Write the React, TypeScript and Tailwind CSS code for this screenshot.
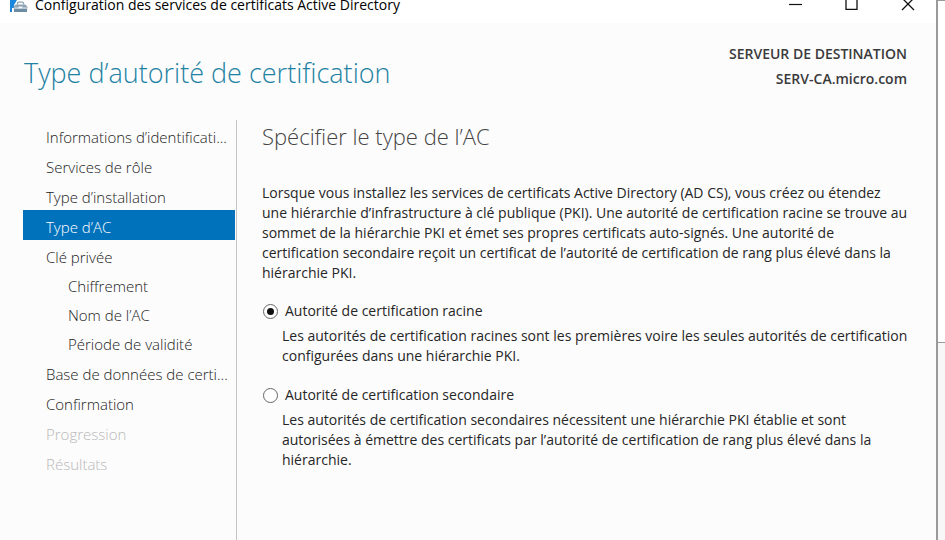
import { useState } from 'react';
import clsx from 'clsx';

type Step = {
  label: string;
  child?: boolean;
  disabled?: boolean;
};

const steps: Step[] = [
  { label: 'Informations d’identificati...' },
  { label: 'Services de rôle' },
  { label: 'Type d’installation' },
  { label: 'Type d’AC' },
  { label: 'Clé privée' },
  { label: 'Chiffrement', child: true },
  { label: 'Nom de l’AC', child: true },
  { label: 'Période de validité', child: true },
  { label: 'Base de données de certi...' },
  { label: 'Confirmation' },
  { label: 'Progression', disabled: true },
  { label: 'Résultats', disabled: true },
];

const options = [
  {
    id: 'racine',
    label: 'Autorité de certification racine',
    lines: [
      'Les autorités de certification racines sont les premières voire les seules autorités de certification',
      'configurées dans une hiérarchie PKI.',
    ],
  },
  {
    id: 'secondaire',
    label: 'Autorité de certification secondaire',
    lines: [
      'Les autorités de certification secondaires nécessitent une hiérarchie PKI établie et sont',
      'autorisées à émettre des certificats par l’autorité de certification de rang plus élevé dans la',
      'hiérarchie.',
    ],
  },
];

const intro = [
  'Lorsque vous installez les services de certificats Active Directory (AD CS), vous créez ou étendez',
  'une hiérarchie d’infrastructure à clé publique (PKI). Une autorité de certification racine se trouve au',
  'sommet de la hiérarchie PKI et émet ses propres certificats auto-signés. Une autorité de',
  'certification secondaire reçoit un certificat de l’autorité de certification de rang plus élevé dans la',
  'hiérarchie PKI.',
];

function Lines({ lines }: { lines: string[] }) {
  return lines.map((line) => (
    <span key={line} className="block whitespace-nowrap">
      {line}
    </span>
  ));
}

function ToolboxIcon() {
  return (
    <svg width="18" height="13" viewBox="0 0 18 13" aria-hidden="true">
      <path d="M0 0h7L4 5v3H2v4H0z" fill="#1b87dc" />
      <path d="M7.500 4.500V3.200Q7.500 2.200 8.500 2.200h4Q13.500 2.200 13.500 3.200v1.300" fill="none" stroke="#8fa5b5" strokeWidth="1.200" />
      <path d="M5.500 4.500h10L17.500 7v1.500h-14V7z" fill="#8fa5b5" />
      <path d="M4 8.500h13V12H4z" fill="#6d8ba1" />
      <path d="M4.500 8h4M12.500 8h4.500" stroke="#e3ebf0" strokeWidth="0.900" />
      <path d="M8.500 6.500h4v2h-4z" fill="#f1f5f8" />
    </svg>
  );
}

function TitleBar() {
  return (
    <header className="flex h-[23px] items-start justify-between bg-white pr-[21px] pl-[10px]">
      <div className="flex items-start gap-[7px]">
        <ToolboxIcon />
        <span className="text-[14px] leading-[10px] whitespace-nowrap text-black">
          Configuration des services de certificats Active Directory
        </span>
      </div>
      <div className="flex gap-[41px]">
        <button type="button" aria-label="Réduire">
          <svg width="15" height="12" viewBox="0 0 15 12" className="block">
            <path d="M1 4.500h13" stroke="#111" strokeWidth="1.200" />
          </svg>
        </button>
        <button type="button" aria-label="Agrandir">
          <svg width="15" height="12" viewBox="0 0 15 12" className="block">
            <path d="M2 -3h11v12.300H2z" fill="none" stroke="#111" strokeWidth="1.300" />
          </svg>
        </button>
        <button type="button" aria-label="Fermer">
          <svg width="15" height="12" viewBox="0 0 15 12" className="block">
            <path d="M2 -2l12 12M14 -2L2 10" stroke="#111" strokeWidth="1.300" />
          </svg>
        </button>
      </div>
    </header>
  );
}

function StepNav() {
  return (
    <nav className="w-[214px] shrink-0 border-r border-[#c4c4c4] pr-px">
      <ul>
        {steps.map(({ label, child, disabled }) => {
          const current = label === 'Type d’AC';
          return (
            <li key={label}>
              <button
                type="button"
                disabled={disabled}
                aria-current={current ? 'step' : undefined}
                className={clsx(
                  'flex w-full items-center pt-1 text-left text-[15px] font-light whitespace-nowrap',
                  child ? 'h-[29px] pl-[45px]' : 'h-[30px] pl-[23px]',
                  current && 'bg-[#0072bc] text-white',
                  disabled && 'text-[#b8b8b8]',
                  !current && !disabled && 'text-[#222]',
                )}
              >
                {label}
              </button>
            </li>
          );
        })}
      </ul>
    </nav>
  );
}

export default function App() {
  const [type, setType] = useState('racine');

  return (
    <div className="flex min-h-screen font-['Open_Sans','Noto_Sans',sans-serif]">
      <div className="flex min-w-0 flex-1 flex-col border-r-2 border-[#9a9a9a] bg-[#fcfcfc]">
        <TitleBar />
        <div className="flex items-start justify-between pt-[18px] pr-[29px] pl-6">
          <h1 className="pt-[10px] text-[27px] leading-[44px] font-light whitespace-nowrap text-[#1e82a3]">
            Type d’autorité de certification
          </h1>
          <div className="text-right text-[14px] leading-[25px] font-semibold whitespace-nowrap text-[#3a3a3a]">
            <p>SERVEUR DE DESTINATION</p>
            <p>SERV-CA.micro.com</p>
          </div>
        </div>
        <div className="flex flex-1 pt-[25px] pl-[23px]">
          <StepNav />
          <main className="min-w-0 flex-1 pl-[25px] text-[14px] leading-5 text-[#262626]">
            <h2 className="text-[22px] leading-8 font-light text-[#444]">Spécifier le type de l’AC</h2>
            <p className="pt-[31px]">
              <Lines lines={intro} />
            </p>
            <div className="flex flex-col gap-[19px] pt-[18px]">
              {options.map(({ id, label, lines }) => (
                <div key={id}>
                  <label className="flex items-center gap-[7px]">
                    <input
                      type="radio"
                      name="type-ac"
                      value={id}
                      checked={type === id}
                      onChange={() => setType(id)}
                      className="ml-px grid size-[15px] appearance-none place-items-center rounded-full border border-[#666] bg-white before:size-[7px] before:rounded-full checked:before:bg-[#111]"
                    />
                    {label}
                  </label>
                  <p className="pt-[5px] pl-5">
                    <Lines lines={lines} />
                  </p>
                </div>
              ))}
            </div>
          </main>
        </div>
      </div>
      <div className="flex w-[7px] shrink-0 flex-col">
        <div className="h-[343px] border-t border-b border-[#9a9a9a] bg-white" />
        <div className="flex-1 bg-[#f7f7f7]" />
      </div>
    </div>
  );
}
